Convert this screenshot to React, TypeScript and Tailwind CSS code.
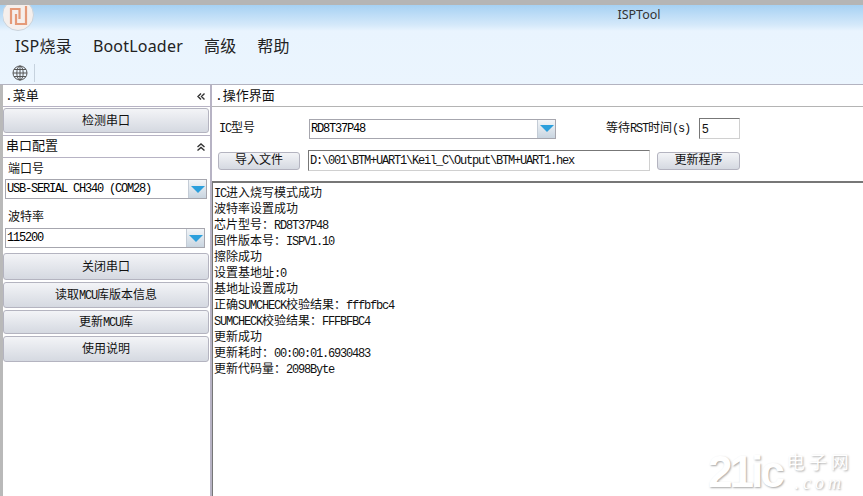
import React from 'react';

const Latin = ({ children }: { children: React.ReactNode }) => (
  <span className="text-[12px] tracking-[-1.2px]">{children}</span>
);

const SideButton = ({ children, className }: { children: React.ReactNode; className: string }) => (
  <button className={`flex w-[206px] shrink-0 items-center justify-center rounded-[3px] border border-[#b4b4c0] bg-gradient-to-b from-[#f3f4f7] to-[#d5d9e1] pt-[2px] text-[12px] text-[#111] ${className}`}>
    {children}
  </button>
);

const Arrow = () => (
  <div className="flex w-[18px] shrink-0 items-center justify-center border-l border-[#c4ccd6] bg-gradient-to-b from-[#f2f5f8] to-[#c9d5e0]">
    <svg width="14" height="7" viewBox="0 0 14 7">
      <path d="M0 0H14L7 7Z" fill="#2b9fdc" />
    </svg>
  </div>
);

const Combo = ({ text, className }: { text: string; className: string }) => (
  <div className={`flex shrink-0 items-stretch border border-[#a6a6ae] bg-white ${className}`}>
    <div className="flex flex-1 items-center pl-[1px] text-[12px] tracking-[-1.2px] text-black">{text}</div>
    <Arrow />
  </div>
);

const logLines: React.ReactNode[] = [
  <>
    <Latin>IC</Latin>进入烧写模式成功
  </>,
  <>波特率设置成功</>,
  <>
    芯片型号：<Latin>RD8T37P48</Latin>
  </>,
  <>
    固件版本号：<Latin>ISPV1.10</Latin>
  </>,
  <>擦除成功</>,
  <>
    设置基地址<Latin>:0</Latin>
  </>,
  <>基地址设置成功</>,
  <>
    正确<Latin>SUMCHECK</Latin>校验结果：<Latin>fffbfbc4</Latin>
  </>,
  <>
    <Latin>SUMCHECK</Latin>校验结果：<Latin>FFFBFBC4</Latin>
  </>,
  <>更新成功</>,
  <>
    更新耗时：<Latin>00:00:01.6930483</Latin>
  </>,
  <>
    更新代码量：<Latin>2098Byte</Latin>
  </>,
];

const App = () => {
  return (
    <div className="relative flex h-[496px] w-[863px] flex-col overflow-hidden bg-white font-['Liberation_Mono','Noto_Sans_CJK_SC',monospace] text-[12px] text-[#111]">
      <div className="h-[5px] shrink-0 bg-[#b5b5b5]" />

      {/* 标题栏 + 菜单 */}
      <div className="flex h-[80px] shrink-0 flex-col border-b border-[#b3b3c0] bg-[linear-gradient(#a6d1f3_0px,#d5e9fa_20px,#e9f4fe_26px,#ebf5fe_100%)] pl-[3px]">
        <div className="flex h-[20px] shrink-0 items-center justify-center pl-[412px] font-['Noto_Sans','Noto_Sans_CJK_SC',sans-serif] text-[12.5px] text-[#333]">
          ISPTool
        </div>
        <div className="flex h-[39px] shrink-0 items-center gap-[21px] pl-[12px] pt-[2px] font-['Noto_Sans','Noto_Sans_CJK_SC',sans-serif] text-[16px] tracking-[0.2px] text-[#222]">
          <span>ISP烧录</span>
          <span>BootLoader</span>
          <span>高级</span>
          <span>帮助</span>
        </div>
        <div className="flex items-center gap-[6px] pl-[9px]">
          <svg width="16" height="16" viewBox="0 0 16 16" fill="none" stroke="#555" strokeWidth="1">
            <circle cx="8" cy="8" r="7" />
            <ellipse cx="8" cy="8" rx="3.2" ry="7" />
            <path d="M8 1V15M1 8H15M2 4.5H14M2 11.5H14" />
          </svg>
          <div className="h-[18px] w-px bg-[#c6d2de]" />
        </div>
      </div>

      <div className="flex min-h-0 flex-1 bg-[#b9b9b9] pl-[3px]">
        {/* 左侧菜单 */}
        <div className="flex w-[207px] shrink-0 flex-col bg-white">
          <div className="flex h-[22px] shrink-0 items-center justify-between border-b border-[#b7b3c4] pl-[2px] pr-[5px] pt-[2px] text-[13px]">
            <span>.菜单</span>
            <svg width="8" height="7" viewBox="0 0 8 7" fill="none" stroke="#333" strokeWidth="1.4">
              <path d="M4 0.5L1 3.5L4 6.5M7.5 0.5L4.5 3.5L7.5 6.5" />
            </svg>
          </div>
          <SideButton className="mt-px h-[25px]">检测串口</SideButton>
          <div className="mt-[2px] flex h-[23px] shrink-0 items-center justify-between border-y border-[#b7b3c4] pl-[3px] pr-[5px] pt-px text-[13px]">
            <span>串口配置</span>
            <svg width="8" height="8" viewBox="0 0 8 8" fill="none" stroke="#333" strokeWidth="1.4">
              <path d="M0.5 4L4 1L7.5 4M0.5 7.5L4 4.5L7.5 7.5" />
            </svg>
          </div>
          <div className="mt-[3px] h-[16px] shrink-0 pl-[5px] pt-px text-[12px] leading-[16px]">端口号</div>
          <Combo text="USB-SERIAL CH340 (COM28)" className="ml-[2px] mt-[2px] h-[20px] w-[202px]" />
          <div className="mt-[9px] h-[18px] shrink-0 pl-[5px] pt-px text-[12px] leading-[18px]">波特率</div>
          <Combo text="115200" className="ml-[2px] mt-[2px] h-[20px] w-[200px]" />
          <SideButton className="mt-[5px] h-[27px]">关闭串口</SideButton>
          <SideButton className="mt-[2px] h-[26px]">
            读取<Latin>MCU</Latin>库版本信息
          </SideButton>
          <SideButton className="mt-[2px] h-[24px]">
            更新<Latin>MCU</Latin>库
          </SideButton>
          <SideButton className="mt-[2px] h-[26px]">使用说明</SideButton>
        </div>

        <div className="w-[2px] shrink-0 bg-[#b7b3c4]" />

        {/* 操作界面 */}
        <div className="flex min-w-0 flex-1 flex-col bg-white">
          <div className="flex h-[22px] shrink-0 items-center border-b border-[#b4b4b4] pl-[3px] pt-[2px] text-[13px]">.操作界面</div>
          <div className="flex h-[74px] shrink-0 flex-col">
            <div className="mt-[11px] flex h-[21px] items-center pl-[7px]">
              <span className="w-[90px]">
                <Latin>IC</Latin>型号
              </span>
              <Combo text="RD8T37P48" className="h-[20px] w-[247px]" />
              <span className="ml-[50px] w-[93px]">
                等待<Latin>RST</Latin>时间<Latin>(s)</Latin>
              </span>
              <div className="flex h-[21px] w-[41px] items-center border border-[#d0d0d0] border-l-[#777] border-t-[#777] pl-[2px] font-['Liberation_Sans',sans-serif] text-[12px]">5</div>
            </div>
            <div className="mt-[11px] flex h-[21px] items-center pl-[6px]">
              <button className="h-[18px] w-[82px] rounded-[3px] border border-[#b4b4c0] bg-gradient-to-b from-[#f3f4f7] to-[#d5d9e1] text-[12px] leading-none">导入文件</button>
              <div className="ml-[8px] flex h-[21px] w-[342px] items-center border border-[#d0d0d0] border-l-[#777] border-t-[#777] pl-px text-[12px] tracking-[-1.2px]">
                D:\001\BTM+UART1\Keil_C\Output\BTM+UART1.hex
              </div>
              <button className="ml-[7px] h-[18px] w-[83px] rounded-[3px] border border-[#b4b4c0] bg-gradient-to-b from-[#f3f4f7] to-[#d5d9e1] text-[12px] leading-none">更新程序</button>
            </div>
          </div>
          <div className="min-h-0 flex-1 border-l border-t-2 border-l-[#777] border-t-[#777] pl-px pt-[3px] text-[12px] leading-[16px] text-[#111]">
            {logLines.map((line, i) => (
              <div key={i} className="h-[16px]">
                {line}
              </div>
            ))}
          </div>
        </div>
      </div>

      {/* logo */}
      <svg className="absolute left-[3px] top-[5px]" width="32" height="27" viewBox="0 0 32 27" fill="none">
        <circle cx="15" cy="10" r="15.5" fill="#f5efec" stroke="#c9d3dc" />
        <path d="M8 19V4H16.5V14M23 1V19H13V9" stroke="#e59a78" strokeWidth="2.2" />
      </svg>

      {/* 水印 */}
      <div className="absolute left-[708px] top-[448px] flex gap-[5px] text-white [text-shadow:1px_1px_2px_#a8a8a8]">
        <span className="whitespace-nowrap font-['Liberation_Sans',sans-serif] text-[44px] font-bold leading-[48px] tracking-[-3px]">21ic</span>
        <div className="flex flex-col items-center">
          <span className="font-['Noto_Sans_CJK_SC',sans-serif] text-[18px] leading-[26px] tracking-[4px]">电子网</span>
          <span className="font-['Liberation_Serif',serif] text-[18px] italic leading-[18px] tracking-[4px]">.com</span>
        </div>
      </div>
    </div>
  );
};

export default App;
